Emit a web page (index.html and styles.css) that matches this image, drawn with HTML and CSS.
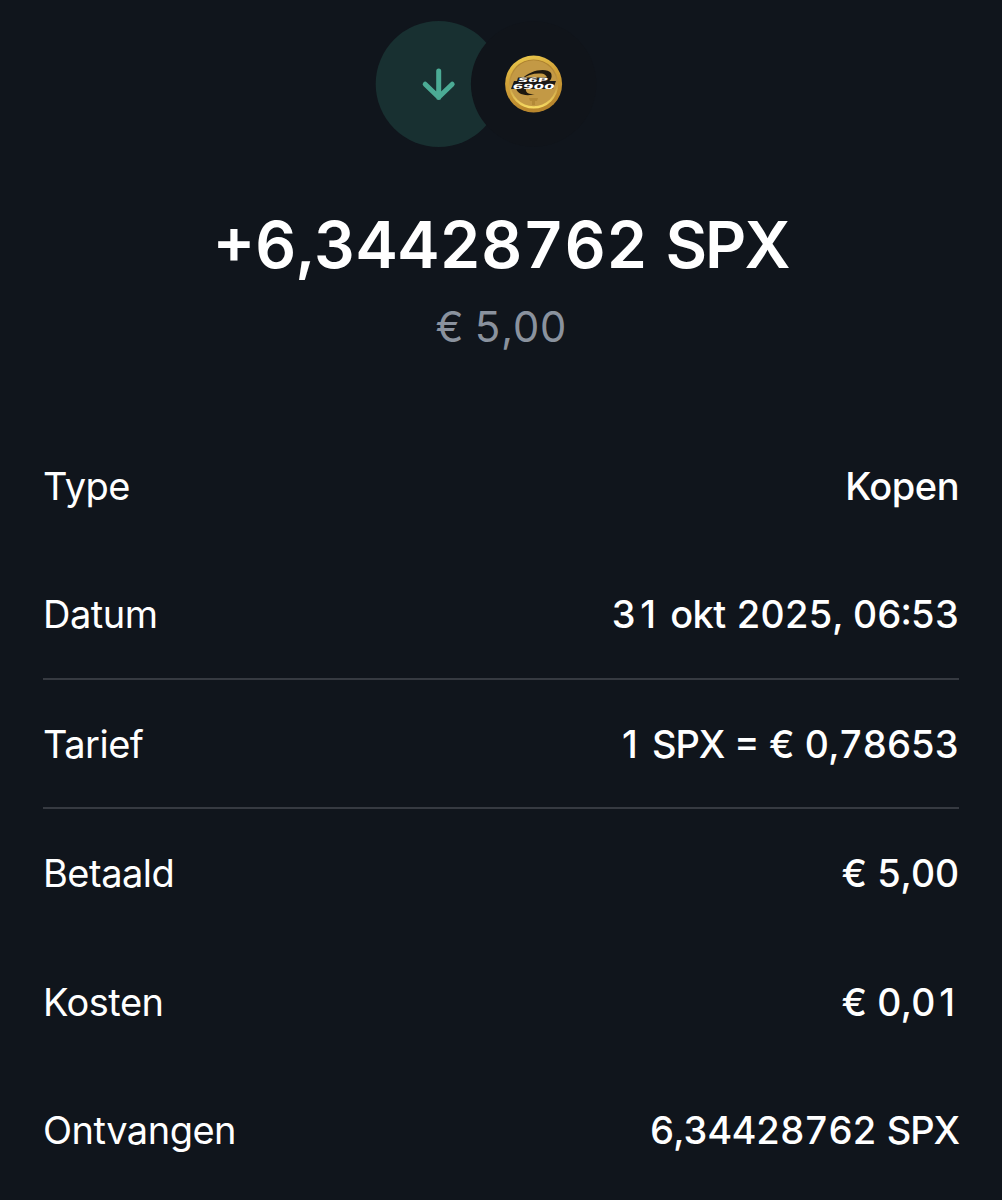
FILE: index.html
```html
<!DOCTYPE html>
<html lang="nl">
<head>
    <meta charset="UTF-8">
    <meta name="viewport" content="width=device-width, initial-scale=1.0">
    <title>Transactie</title>
    <link rel="stylesheet" href="styles.css">
</head>
<body>

<!-- Header Section -->
<div class="header">
    <svg class="icons" viewBox="0 0 222 128" width="222" height="128">
        <defs>
            <linearGradient id="rim" x1="0" y1="0" x2="0.3" y2="1">
                <stop offset="0" stop-color="#f0d050"/>
                <stop offset="0.45" stop-color="#d3a43a"/>
                <stop offset="1" stop-color="#b8862d"/>
            </linearGradient>
            <linearGradient id="inner" x1="0" y1="0" x2="0" y2="1">
                <stop offset="0" stop-color="#a87d2c"/>
                <stop offset="0.5" stop-color="#c59a42"/>
                <stop offset="1" stop-color="#f8dc62"/>
            </linearGradient>
        </defs>
        <circle cx="63.7" cy="64" r="63" fill="#183031"/>
        <path d="M63.7 51V77.5M50.2 64.2L63.7 77.3L77.2 64.2" fill="none" stroke="#4bab95" stroke-width="5" stroke-linecap="round" stroke-linejoin="round"/>
        <circle cx="158.6" cy="64" r="62.7" fill="#10141a"/>
        <!-- coin -->
        <circle cx="158.6" cy="64" r="28.5" fill="url(#rim)"/>
        <circle cx="158.6" cy="64" r="24.6" fill="url(#inner)"/>
        <circle cx="158.6" cy="63.2" r="23" fill="#c39945"/>
        <path d="M154 78h9l-1 3h-2v4h-3v-4h-2z" fill="#b38937"/>
        <path d="M147 59C154 50 172 47 176 53C178 58 175 61 172 63C173 58 172 54 166 53.5C159 53 152 55 147 59Z" fill="#1d180f"/>
        <path d="M141 67C141 74 150 77 161 74C153 75 150 72 151 68L144 66Z" fill="#1d180f"/>
        <path d="M143 57.5H174L172.5 61H181L178 69H136L139 61H142Z" fill="#1d1a17"/>
        <text class="coin-text" transform="translate(142.5 62.3) skewX(-14)" textLength="30" lengthAdjust="spacingAndGlyphs" font-size="6">S6P</text>
        <text class="coin-text" transform="translate(137 68.5) skewX(-14)" textLength="42" lengthAdjust="spacingAndGlyphs" font-size="7">6900</text>
    </svg>
    <h1 class="amount">+6,34428762 <span class="unit">SPX</span></h1>
    <p class="fiat">€ 5,00</p>
</div>

<!-- Details Section -->
<div class="details">
    <div class="row">
        <span class="label">Type</span>
        <span class="value">Kopen</span>
    </div>
    <div class="row divider">
        <span class="label">Datum</span>
        <span class="value">3<span class="one">1</span> okt 2025, 06:53</span>
    </div>
    <div class="row divider rate">
        <span class="label">Tarief</span>
        <span class="value"><span class="one">1</span> <span class="unit">SPX</span> = € 0,78653</span>
    </div>
    <div class="row">
        <span class="label">Betaald</span>
        <span class="value">€ 5,00</span>
    </div>
    <div class="row">
        <span class="label">Kosten</span>
        <span class="value">€ 0,0<span class="one">1</span></span>
    </div>
    <div class="row">
        <span class="label">Ontvangen</span>
        <span class="value">6,34428762 <span class="unit">SPX</span></span>
    </div>
</div>

</body>
</html>
```
FILE: styles.css
```css
body {
    margin: 0;
    padding: 20px 43px 0;
    background-color: #10151c;
    color: #fff;
    font-family: Inter, sans-serif;
    font-variant-numeric: tabular-nums;
}
.header {
    display: flex;
    flex-direction: column;
    align-items: center;
    height: 402px;
}
.icons {
    display: block;
    margin-right: 30px;
}
.coin-text {
    font-family: "DejaVu Sans", sans-serif;
    font-weight: bold;
    fill: #fff;
}
.amount {
    margin: 57px 0 0;
    font-size: 64px;
    font-weight: 600;
    line-height: 80px;
    letter-spacing: 0.3px;
    font-feature-settings: "case";
}
.fiat {
    margin: 16px 0 0;
    color: #8a929e;
    font-size: 42px;
    line-height: 52px;
    letter-spacing: -0.2px;
}
.row {
    display: flex;
    justify-content: space-between;
    align-items: center;
    height: 128.5px;
    font-size: 38px;
    letter-spacing: -0.5px;
}
.divider {
    box-sizing: border-box;
    height: 129px;
    border-bottom: 2px solid #363a41;
}
.rate {
    height: 129.5px;
    padding-top: 2px;
}
.value {
    font-weight: 500;
    font-feature-settings: "case";
    word-spacing: 0.7px;
}
/* plain 1 without the foot, kept as wide as the other digits */
.one {
    display: inline-block;
    width: 24px;
    text-align: center;
    font-variant-numeric: proportional-nums;
}
.unit {
    letter-spacing: -0.03em;
}
```
